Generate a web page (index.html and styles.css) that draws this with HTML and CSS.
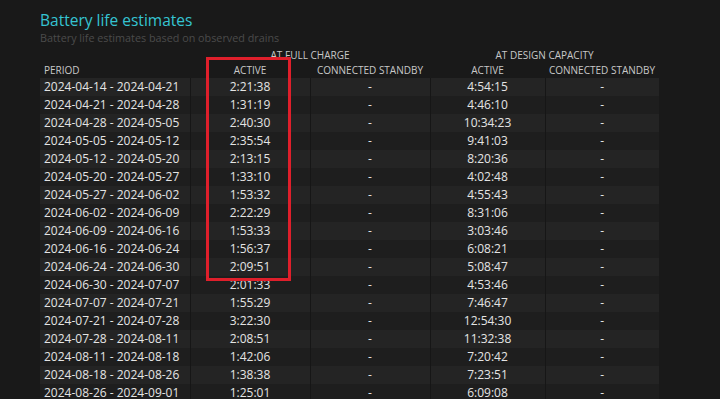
FILE: index.html
```html
<!DOCTYPE html>
<html>
<head>
<meta charset="utf-8">
<link rel="stylesheet" href="styles.css">
</head>
<body>
<div class="page">
  <h1 class="title">Battery life estimates</h1>
  <div class="subtitle">Battery life estimates based on observed drains</div>
  <table class="est">
    <colgroup>
      <col class="c-period"><col class="c-act1"><col class="c-cs1"><col class="c-act2"><col class="c-cs2">
    </colgroup>
    <thead>
      <tr class="group">
        <th></th>
        <th colspan="2">AT FULL CHARGE</th>
        <th colspan="2">AT DESIGN CAPACITY</th>
      </tr>
      <tr class="cols">
        <th class="left">PERIOD</th>
        <th>ACTIVE</th>
        <th>CONNECTED STANDBY</th>
        <th>ACTIVE</th>
        <th>CONNECTED STANDBY</th>
      </tr>
    </thead>
    <tbody>
      <tr><td class="left">2024-04-14 - 2024-04-21</td><td>2:21:38</td><td>-</td><td>4:54:15</td><td>-</td></tr>
      <tr><td class="left">2024-04-21 - 2024-04-28</td><td>1:31:19</td><td>-</td><td>4:46:10</td><td>-</td></tr>
      <tr><td class="left">2024-04-28 - 2024-05-05</td><td>2:40:30</td><td>-</td><td>10:34:23</td><td>-</td></tr>
      <tr><td class="left">2024-05-05 - 2024-05-12</td><td>2:35:54</td><td>-</td><td>9:41:03</td><td>-</td></tr>
      <tr><td class="left">2024-05-12 - 2024-05-20</td><td>2:13:15</td><td>-</td><td>8:20:36</td><td>-</td></tr>
      <tr><td class="left">2024-05-20 - 2024-05-27</td><td>1:33:10</td><td>-</td><td>4:02:48</td><td>-</td></tr>
      <tr><td class="left">2024-05-27 - 2024-06-02</td><td>1:53:32</td><td>-</td><td>4:55:43</td><td>-</td></tr>
      <tr><td class="left">2024-06-02 - 2024-06-09</td><td>2:22:29</td><td>-</td><td>8:31:06</td><td>-</td></tr>
      <tr><td class="left">2024-06-09 - 2024-06-16</td><td>1:53:33</td><td>-</td><td>3:03:46</td><td>-</td></tr>
      <tr><td class="left">2024-06-16 - 2024-06-24</td><td>1:56:37</td><td>-</td><td>6:08:21</td><td>-</td></tr>
      <tr><td class="left">2024-06-24 - 2024-06-30</td><td>2:09:51</td><td>-</td><td>5:08:47</td><td>-</td></tr>
      <tr><td class="left">2024-06-30 - 2024-07-07</td><td>2:01:33</td><td>-</td><td>4:53:46</td><td>-</td></tr>
      <tr><td class="left">2024-07-07 - 2024-07-21</td><td>1:55:29</td><td>-</td><td>7:46:47</td><td>-</td></tr>
      <tr><td class="left">2024-07-21 - 2024-07-28</td><td>3:22:30</td><td>-</td><td>12:54:30</td><td>-</td></tr>
      <tr><td class="left">2024-07-28 - 2024-08-11</td><td>2:08:51</td><td>-</td><td>11:32:38</td><td>-</td></tr>
      <tr><td class="left">2024-08-11 - 2024-08-18</td><td>1:42:06</td><td>-</td><td>7:20:42</td><td>-</td></tr>
      <tr><td class="left">2024-08-18 - 2024-08-26</td><td>1:38:38</td><td>-</td><td>7:23:51</td><td>-</td></tr>
      <tr><td class="left">2024-08-26 - 2024-09-01</td><td>1:25:01</td><td>-</td><td>6:09:08</td><td>-</td></tr>
    </tbody>
  </table>
  <div class="highlight"></div>
</div>
</body>
</html>
```

FILE: styles.css
```css
html, body {
  margin: 0;
  padding: 0;
  background: #191919;
  overflow: hidden;
  height: 399px;
}
.page {
  position: relative;
  padding: 10px 0 0 40px;
  font-family: "Open Sans", "Noto Sans", sans-serif;
  color: #dcdcdc;
}
.title {
  margin: 0;
  font-size: 15.5px;
  line-height: 20px;
  font-weight: 400;
  color: #35c4d2;
}
.subtitle {
  font-size: 10.8px;
  line-height: 16px;
  color: #4b4b4b;
}
.est {
  margin-top: 2px;
  border-collapse: collapse;
  width: 619px;
  table-layout: fixed;
}
.c-period { width: 150px; }
.c-act1 { width: 120px; }
.c-cs1 { width: 120px; }
.c-act2 { width: 115px; }
.c-cs2 { width: 114px; }
.est th {
  font-size: 10px;
  font-weight: 400;
  color: #c8c8c8;
  padding: 0;
  text-align: center;
  white-space: nowrap;
}
.group th { height: 15px; line-height: 15px; }
.cols th { height: 15px; line-height: 14px; vertical-align: top; }
.est th.left, .est td.left { text-align: left; padding-left: 4px; }
.est td {
  font-size: 12px;
  height: 18px;
  line-height: 18px;
  padding: 0;
  text-align: center;
  white-space: nowrap;
  color: #e4e4e4;
  border-right: 1px solid #161616;
}
.est td:last-child { border-right: none; }
.est tbody tr:nth-child(odd) td { background: #242424; }
.est tbody tr:nth-child(even) td { background: #1e1e1e; }
.highlight {
  position: absolute;
  left: 206px;
  top: 57px;
  width: 79px;
  height: 218px;
  border: 3px solid #df1f2b;
}
```
